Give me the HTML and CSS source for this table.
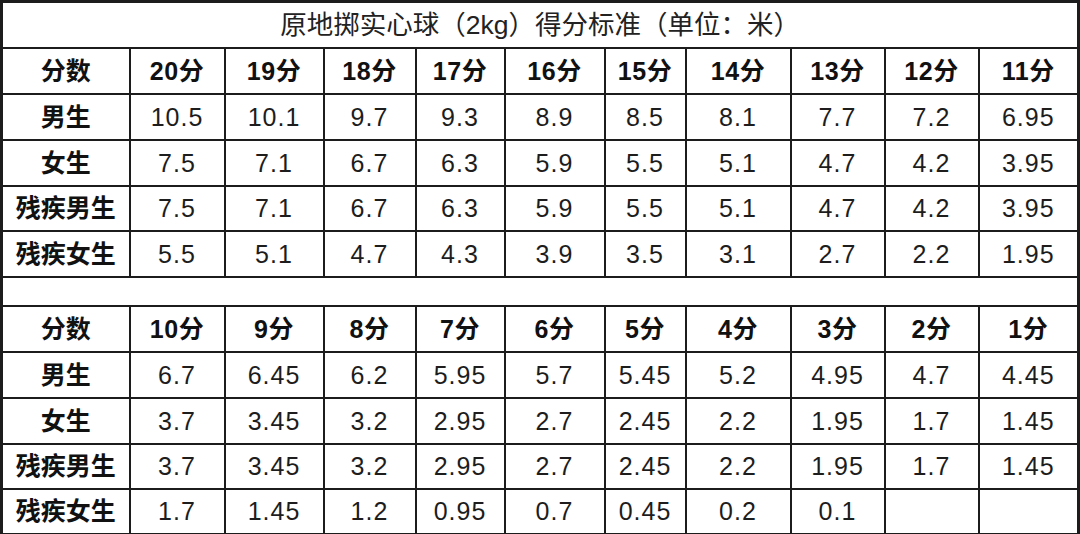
FILE: index.html
```html
<!DOCTYPE html>
<html lang="zh">
<head>
<meta charset="utf-8">
<title>原地掷实心球得分标准</title>
<link rel="stylesheet" href="styles.css">
</head>
<body>
<table class="score">
  <colgroup>
    <col class="c-label">
    <col class="c95"><col class="c99"><col class="c92"><col class="c89"><col class="c100">
    <col class="c81"><col class="c105"><col class="c94"><col class="c94"><col class="c100">
  </colgroup>
  <tr class="title-row"><td colspan="11">原地掷实心球（2kg）得分标准（单位：米）</td></tr>
  <tr class="head"><th>分数</th><td>20分</td><td>19分</td><td>18分</td><td>17分</td><td>16分</td><td>15分</td><td>14分</td><td>13分</td><td>12分</td><td>11分</td></tr>
  <tr><th>男生</th><td>10.5</td><td>10.1</td><td>9.7</td><td>9.3</td><td>8.9</td><td>8.5</td><td>8.1</td><td>7.7</td><td>7.2</td><td>6.95</td></tr>
  <tr><th>女生</th><td>7.5</td><td>7.1</td><td>6.7</td><td>6.3</td><td>5.9</td><td>5.5</td><td>5.1</td><td>4.7</td><td>4.2</td><td>3.95</td></tr>
  <tr class="short"><th>残疾男生</th><td>7.5</td><td>7.1</td><td>6.7</td><td>6.3</td><td>5.9</td><td>5.5</td><td>5.1</td><td>4.7</td><td>4.2</td><td>3.95</td></tr>
  <tr><th>残疾女生</th><td>5.5</td><td>5.1</td><td>4.7</td><td>4.3</td><td>3.9</td><td>3.5</td><td>3.1</td><td>2.7</td><td>2.2</td><td>1.95</td></tr>
  <tr class="gap"><td colspan="11"></td></tr>
  <tr class="head"><th>分数</th><td>10分</td><td>9分</td><td>8分</td><td>7分</td><td>6分</td><td>5分</td><td>4分</td><td>3分</td><td>2分</td><td>1分</td></tr>
  <tr><th>男生</th><td>6.7</td><td>6.45</td><td>6.2</td><td>5.95</td><td>5.7</td><td>5.45</td><td>5.2</td><td>4.95</td><td>4.7</td><td>4.45</td></tr>
  <tr><th>女生</th><td>3.7</td><td>3.45</td><td>3.2</td><td>2.95</td><td>2.7</td><td>2.45</td><td>2.2</td><td>1.95</td><td>1.7</td><td>1.45</td></tr>
  <tr class="short"><th>残疾男生</th><td>3.7</td><td>3.45</td><td>3.2</td><td>2.95</td><td>2.7</td><td>2.45</td><td>2.2</td><td>1.95</td><td>1.7</td><td>1.45</td></tr>
  <tr><th>残疾女生</th><td>1.7</td><td>1.45</td><td>1.2</td><td>0.95</td><td>0.7</td><td>0.45</td><td>0.2</td><td>0.1</td><td></td><td></td></tr>
</table>
</body>
</html>
```

FILE: styles.css
```css
html, body {
  margin: 0;
  padding: 0;
  background: #ffffff;
}

.score {
  border-collapse: collapse;
  table-layout: fixed;
  width: 1078px;
  border: 3px solid #1c1c1c;
  font-family: "Liberation Sans", "Noto Sans CJK SC", sans-serif;
  font-size: 25px;
  line-height: 30px;
  color: #1d1d1d;
}

.c-label { width: 128px; }
.c95 { width: 95px; }
.c99 { width: 99px; }
.c92 { width: 92px; }
.c89 { width: 89px; }
.c100 { width: 100px; }
.c81 { width: 81px; }
.c105 { width: 105px; }
.c94 { width: 94px; }

.score tr { height: 46px; }
.score tr.short { height: 45px; }
.score tr.gap { height: 29px; }

.score td,
.score th {
  border: 2px solid #1c1c1c;
  padding: 0;
  text-align: center;
  vertical-align: middle;
  font-weight: normal;
  letter-spacing: 1px;
}

.score th {
  font-weight: bold;
  color: #111111;
  letter-spacing: 0;
}

.score .head td {
  font-weight: bold;
  color: #111111;
  letter-spacing: 0.5px;
}

.score .title-row td {
  font-size: 26.5px;
  font-weight: normal;
  color: #222222;
  letter-spacing: 0;
}
```
